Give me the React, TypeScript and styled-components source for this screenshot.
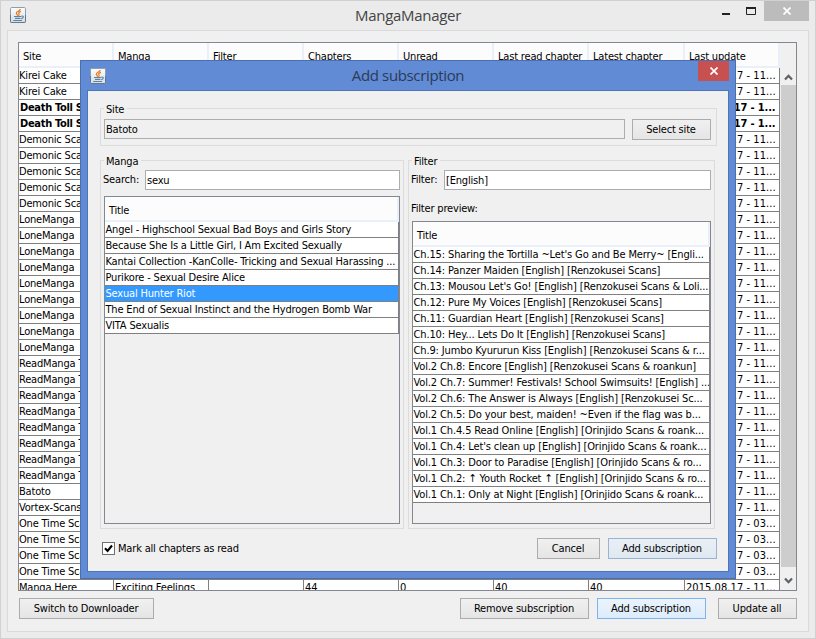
import React from "react";
import styled, { createGlobalStyle } from "styled-components";

const Global = createGlobalStyle`
  *, *::before, *::after { box-sizing: border-box; }
  body { margin: 0; overflow: hidden; }
  button, input { font: inherit; color: inherit; letter-spacing: inherit; }
`;

const Win = styled.div`
  position: relative;
  width: 816px;
  height: 639px;
  display: flex;
  flex-direction: column;
  padding: 0 6px 6px;
  background: #ebebeb;
  border: 1px solid #d1d1d1;
  overflow: hidden;
  color: #000;
  font: 11px/15px "DejaVu Sans Condensed", "DejaVu Sans", Tahoma, sans-serif;
  font-stretch: condensed;
  letter-spacing: -0.18px;
  white-space: nowrap;
`;

const Caption = styled.div`
  display: grid;
  grid-template-columns: 1fr auto 1fr;
  flex: none;
  height: 29px;
`;

const CaptionIcon = styled.div<{ $top: number }>`
  padding: ${(p) => p.$top}px 0 0 3px;
  svg { display: block; }
`;

const Title = styled.h1<{ $ink: string; $gap: number }>`
  margin: 0;
  padding-top: 2px;
  font: 400 15px/24px "Open Sans", "Noto Sans", sans-serif;
  letter-spacing: ${(p) => p.$gap}px;
  color: ${(p) => p.$ink};
`;

const Controls = styled.div`
  display: flex;
  justify-content: flex-end;
`;

const Control = styled.button<{ $w: number; $bg?: string }>`
  width: ${(p) => p.$w}px;
  height: 20px;
  padding: 0;
  border: 0;
  display: grid;
  place-items: center;
  background: ${(p) => p.$bg || "transparent"};
  svg { display: block; }
`;

const Client = styled.main`
  flex: 1;
  min-height: 0;
  display: flex;
  flex-direction: column;
  padding: 11px 11px 0 10px;
  background: #f0f0f0;
  border: 1px solid #dadada;
`;

const Pane = styled.div<{ $h?: number }>`
  display: flex;
  flex: ${(p) => (p.$h ? "none" : "1")};
  height: ${(p) => (p.$h ? `${p.$h}px` : "auto")};
  min-height: 0;
  overflow: hidden;
  border: 1px solid #828790;
`;

const Table = styled.div<{ $cols: string }>`
  flex: 1;
  display: grid;
  grid-template-columns: ${(p) => p.$cols};
  grid-template-rows: 25px;
  grid-auto-rows: 16px;
  align-content: start;
`;

const HeadRow = styled.div`
  display: grid;
  grid-column: 1 / -1;
  grid-template-columns: subgrid;
`;

const Head = styled.div`
  height: 25px;
  padding: 6px 0 0 4px;
  background: #fcfcfd;
  border-right: 2px solid #e9f0fa;
  border-bottom: 2px solid #e9f0fa;
`;

const Row = styled.div<{ $bold?: boolean; $selected?: boolean }>`
  display: grid;
  grid-column: 1 / -1;
  grid-template-columns: subgrid;
  font-weight: ${(p) => (p.$bold ? 700 : 400)};
  color: ${(p) => (p.$selected ? "#fff" : "#000")};
  background: ${(p) => (p.$selected ? "#3399ff" : "#fff")};
`;

const Cell = styled.div<{ $indent?: number; $gap?: number }>`
  height: 16px;
  padding-left: ${(p) => p.$indent || 0}px;
  letter-spacing: ${(p) => (p.$gap === undefined ? "inherit" : `${p.$gap}px`)};
  overflow: hidden;
  border-right: 1px solid #808080;
  border-bottom: 1px solid #808080;
`;

const ScrollBar = styled.div`
  width: 17px;
  display: flex;
  flex-direction: column;
  align-items: center;
  padding-top: 25px;
`;

const Arrow = styled.div<{ $down?: boolean }>`
  height: 17px;
  padding-top: ${(p) => (p.$down ? 10 : 0)}px;
  display: grid;
  place-items: center;
  svg { display: block; }
`;

const Thumb = styled.div`
  width: 15px;
  height: 482px;
  background: #cdcdcd;
`;

const Bar = styled.div<{ $pad: string }>`
  display: flex;
  flex: none;
  align-items: flex-start;
  padding: ${(p) => p.$pad};
`;

const Button = styled.button<{ $w: number; $tone?: "default" | "hot"; $push?: boolean; $ml?: number }>`
  width: ${(p) => p.$w}px;
  height: 21px;
  flex: none;
  padding: 0 1px 0 0;
  margin-left: ${(p) => (p.$push ? "auto" : `${p.$ml || 0}px`)};
  border: 1px solid
    ${(p) => (p.$tone === "hot" ? "#7eb4ea" : p.$tone === "default" ? "#98b4d2" : "#acacac")};
  background: ${(p) =>
    p.$tone === "hot"
      ? "linear-gradient(#ecf4fc, #dcecfc)"
      : p.$tone === "default"
      ? "linear-gradient(#eaeff5, #dfe8f1)"
      : "linear-gradient(#f0f0f0, #e5e5e5)"};
  line-height: 18px;
`;

const Dialog = styled.section`
  position: absolute;
  left: 79px;
  top: 59px;
  width: 656px;
  height: 519px;
  display: flex;
  flex-direction: column;
  padding: 0 6px 6px;
  background: #618bd5;
  border: 1px solid #4a6fb0;
`;

const DialogBody = styled.div`
  flex: 1;
  display: flex;
  flex-direction: column;
  padding: 17px 11px 0 12px;
  background: #f0f0f0;
  border: 1px solid #4d74bb;
`;

const Group = styled.fieldset<{ $h: number; $pad: string }>`
  position: relative;
  height: ${(p) => p.$h}px;
  margin: 0;
  min-width: 0;
  padding: ${(p) => p.$pad};
  border: 1px solid #dcdcdc;
  display: flex;
  flex-direction: column;
`;

const GroupTitle = styled.span`
  position: absolute;
  left: 3px;
  top: -7px;
  padding: 0 3px 0 2px;
  background: #f0f0f0;
`;

const Line = styled.div<{ $h: number }>`
  display: flex;
  flex: none;
  height: ${(p) => p.$h}px;
`;

const Label = styled.label<{ $w?: number; $top: number }>`
  width: ${(p) => (p.$w ? `${p.$w}px` : "auto")};
  flex: none;
  padding-top: ${(p) => p.$top}px;
  margin-left: -1px;
`;

const Field = styled.input`
  flex: 1;
  min-width: 0;
  height: 20px;
  padding: 1px 2px 0 1px;
  border: 1px solid #abadb3;
  border-radius: 0;
  background: #fff;
  outline: 0;
  &:read-only { background: #f0f0f0; }
`;

const Columns = styled.div`
  display: grid;
  grid-template-columns: 304px 307px;
  gap: 4px;
  margin-top: 14px;
`;

const Check = styled.label`
  display: flex;
  align-items: center;
  gap: 3px;
  height: 21px;
  margin-left: 2px;
`;

const CheckBox = styled.span`
  width: 13px;
  height: 13px;
  margin-bottom: 1px;
  border: 1px solid #707070;
  background: #fff;
  svg { display: block; }
`;

function JavaIcon() {
  return (
    <svg width="16" height="16" viewBox="0 0 16 16" fill="none">
      <defs>
        <linearGradient id="tile" x1="0" y1="0" x2="0" y2="1">
          <stop offset="0" stopColor="#fdfdfd" />
          <stop offset="1" stopColor="#d8dce0" />
        </linearGradient>
      </defs>
      <rect x="0.5" y="0.5" width="15" height="15" rx="1.2" fill="url(#tile)" stroke="#8b9fae" />
      <path d="M0.5 8v6.500q0 1 1 1h13q1 0 1-1V8" stroke="#5f7b91" />
      <path d="M10.200 2C10.400 4 6 4.600 6.300 6.300 6.400 7.300 7.800 7.700 7.600 8.800M10.900 4.400C8.600 5.200 8.300 6 9 6.900 9.500 7.600 9 8.300 8.500 8.800" stroke="#e9781c" strokeWidth="1.200" />
      <path d="M4 9.500h7.300M5 11.400h5.500M3.300 13.500h8.700M11.500 9.100c2.600-.6 2.200 2.100-.3 2.600" stroke="#5b83a5" strokeWidth="1.200" />
    </svg>
  );
}

function Cross() {
  return (
    <svg width="8" height="8" viewBox="0 0 8 8">
      <path d="M0.500 0.500L7.500 7.500M7.500 0.500L0.500 7.500" stroke="#fff" strokeWidth="1.700" />
    </svg>
  );
}

function Chevron({ up }: { up?: boolean }) {
  return (
    <svg width="9" height="8" viewBox="0 0 9 8">
      <path d={up ? "M1 6.500L4.500 2.800 8 6.500" : "M1 1.500L4.500 5.200 8 1.500"} fill="none" stroke="#606060" strokeWidth="2.200" />
    </svg>
  );
}

const columns = ["Site", "Manga", "Filter", "Chapters", "Unread", "Last read chapter", "Latest chapter", "Last update"];

const siteRuns: [string, number][] = [
  ["Kirei Cake", 2],
  ["Death Toll Scans", 2],
  ["Demonic Scans", 5],
  ["LoneManga", 9],
  ["ReadManga Today", 8],
  ["Batoto", 1],
  ["Vortex-Scans", 1],
  ["One Time Scans", 4],
];

const subscriptions: string[][] = siteRuns.flatMap(([site, count]) => {
  const date = site.startsWith("Death")
    ? "2015.08.17 - 1..."
    : site.startsWith("One")
    ? "2015.08.17 - 03..."
    : "2015.08.17 - 11...";
  return Array.from({ length: count }, () => [site, "", "", "", "", "", "", date]);
});
subscriptions.push(["Manga Here", "Exciting Feelings", "", "44", "0", "40", "40", "2015.08.17 - 11..."]);

const titles = [
  "Angel - Highschool Sexual Bad Boys and Girls Story",
  "Because She Is a Little Girl, I Am Excited Sexually",
  "Kantai Collection -KanColle- Tricking and Sexual Harassing ...",
  "Purikore - Sexual Desire Alice",
  "Sexual Hunter Riot",
  "The End of Sexual Instinct and the Hydrogen Bomb War",
  "VITA Sexualis",
];

const chapters = [
  "Ch.15: Sharing the Tortilla ~Let's Go and Be Merry~ [Engli...",
  "Ch.14: Panzer Maiden [English] [Renzokusei Scans]",
  "Ch.13: Mousou Let's Go! [English] [Renzokusei Scans & Loli...",
  "Ch.12: Pure My Voices [English] [Renzokusei Scans]",
  "Ch.11: Guardian Heart [English] [Renzokusei Scans]",
  "Ch.10: Hey... Lets Do It [English] [Renzokusei Scans]",
  "Ch.9: Jumbo Kyururun Kiss [English] [Renzokusei Scans & r...",
  "Vol.2 Ch.8: Encore [English] [Renzokusei Scans & roankun]",
  "Vol.2 Ch.7: Summer! Festivals! School Swimsuits! [English] ...",
  "Vol.2 Ch.6: The Answer is Always [English] [Renzokusei Sc...",
  "Vol.2 Ch.5: Do your best, maiden! ~Even if the flag was b...",
  "Vol.1 Ch.4.5 Read Online [English] [Orinjido Scans & roank...",
  "Vol.1 Ch.4: Let's clean up [English] [Orinjido Scans & roank...",
  "Vol.1 Ch.3: Door to Paradise [English] [Orinjido Scans & ro...",
  "Vol.1 Ch.2: ↑ Youth Rocket ↑ [English] [Orinjido Scans & ro...",
  "Vol.1 Ch.1: Only at Night [English] [Orinjido Scans & roank...",
];

interface TitleTableProps {
  rows: string[];
  cols: string;
  gap: number;
  selected?: number;
}

function TitleTable({ rows, cols, gap, selected }: TitleTableProps) {
  return (
    <Table $cols={cols}>
      <HeadRow>
        <Head>Title</Head>
      </HeadRow>
      {rows.map((t, i) => (
        <Row key={t} $selected={i === selected}>
          <Cell $indent={0.5} $gap={gap}>{t}</Cell>
        </Row>
      ))}
    </Table>
  );
}

export default function App() {
  return (
    <Win>
      <Global />
      <Caption>
        <CaptionIcon $top={6}>
          <JavaIcon />
        </CaptionIcon>
        <Title $ink="#444" $gap={-0.3}>MangaManager</Title>
        <Controls>
          <Control $w={26}>
            <svg width="10" height="10" viewBox="0 0 10 10">
              <path d="M2 8h8" stroke="#222" strokeWidth="2" />
            </svg>
          </Control>
          <Control $w={26}>
            <svg width="10" height="8" viewBox="0 0 10 8">
              <path d="M0.500 0v7.500h9V0" fill="none" stroke="#222" />
              <path d="M0 1h10" stroke="#222" strokeWidth="2" />
            </svg>
          </Control>
          <Control $w={45} $bg="#bcbcbc">
            <Cross />
          </Control>
        </Controls>
      </Caption>

      <Client>
        <Pane $h={549}>
          <Table $cols="95px 95px 95px 95px 95px 95px 96px 95px">
            <HeadRow>
              {columns.map((c) => (
                <Head key={c}>{c}</Head>
              ))}
            </HeadRow>
            {subscriptions.map((r, i) => {
              const bold = r[0].startsWith("Death");
              return (
                <Row key={i} $bold={bold}>
                  {r.map((v, j) => (
                    <Cell
                      key={j}
                      $indent={bold || j > 0 ? 1 : 0}
                      $gap={bold ? (j === 0 ? -0.3 : -0.14) : j > 2 ? 0.06 : undefined}
                    >
                      {v}
                    </Cell>
                  ))}
                </Row>
              );
            })}
          </Table>
          <ScrollBar>
            <Arrow><Chevron up /></Arrow>
            <Thumb />
            <Arrow $down><Chevron /></Arrow>
          </ScrollBar>
        </Pane>
        <Bar $pad="7px 0 0 1px">
          <Button $w={135}>Switch to Downloader</Button>
          <Button $w={129} $push>Remove subscription</Button>
          <Button $w={109} $ml={8} $tone="hot">Add subscription</Button>
          <Button $w={79} $ml={12}>Update all</Button>
        </Bar>
      </Client>

      <Dialog>
        <Caption>
          <CaptionIcon $top={7}>
            <JavaIcon />
          </CaptionIcon>
          <Title $ink="#2c3a58" $gap={-0.35}>Add subscription</Title>
          <Controls>
            <Control $w={31} $bg="#c75050">
              <Cross />
            </Control>
          </Controls>
        </Caption>
        <DialogBody>
          <Group $h={38} $pad="10px 5px 0 3px">
            <GroupTitle>Site</GroupTitle>
            <Line $h={21}>
              <Field readOnly value="Batoto" />
              <Button $w={79} $ml={7}>Select site</Button>
            </Line>
          </Group>
          <Columns>
            <Group $h={369} $pad="9px 3px 4px 3px">
              <GroupTitle>Manga</GroupTitle>
              <Line $h={26}>
                <Label $w={42} $top={2}>Search:</Label>
                <Field defaultValue="sexu" />
              </Line>
              <Pane>
                <TitleTable rows={titles} cols="294px" gap={-0.18} selected={4} />
              </Pane>
            </Group>
            <Group $h={369} $pad="9px 3px 4px 3px">
              <GroupTitle>Filter</GroupTitle>
              <Line $h={26}>
                <Label $w={33} $top={2}>Filter:</Label>
                <Field defaultValue="[English]" />
              </Line>
              <Line $h={25}>
                <Label $top={5}>Filter preview:</Label>
              </Line>
              <Pane>
                <TitleTable rows={chapters} cols="297px" gap={-0.13} />
              </Pane>
            </Group>
          </Columns>
          <Bar $pad="9px 0 0">
            <Check>
              <CheckBox>
                <svg width="11" height="11" viewBox="0 0 11 11">
                  <path d="M2 5.200L4.600 8 9 2.500" fill="none" stroke="#000" strokeWidth="2.100" />
                </svg>
              </CheckBox>
              Mark all chapters as read
            </Check>
            <Button $w={63} $push>Cancel</Button>
            <Button $w={109} $ml={8} $tone="default">Add subscription</Button>
          </Bar>
        </DialogBody>
      </Dialog>
    </Win>
  );
}
